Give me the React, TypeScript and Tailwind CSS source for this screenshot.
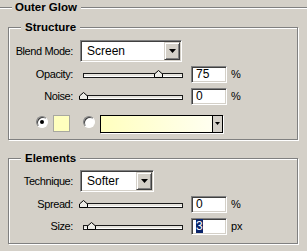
const font = "font-['Liberation_Sans',Arial,sans-serif]";

function Line({ className = "" }: { className?: string }) {
  return <div className={`h-[2px] border-t border-t-[#808080] border-b border-b-white ${className}`} />;
}

function DownArrow({ w = 7, h = 4 }: { w?: number; h?: number }) {
  return (
    <svg width={w} height={h} viewBox={`0 0 ${w} ${h}`} className="block">
      <polygon points={`0,0 ${w},0 ${w / 2},${h}`} fill="#000" />
    </svg>
  );
}

function Select({ value, width }: { value: string; width: string }) {
  return (
    <div
      className={`flex h-[22px] ${width} border border-t-[#808080] border-l-[#808080] border-r-white border-b-white bg-white p-px shadow-[inset_1px_1px_0_#404040,inset_-1px_-1px_0_#d4d0c8]`}
    >
      <span className="flex-1 pl-[5px] text-[12px] leading-[18px] text-black">{value}</span>
      <div className="flex w-[16px] items-center justify-center border border-t-[#d4d0c8] border-l-[#d4d0c8] border-r-[#404040] border-b-[#404040] bg-[#d4d0c8] shadow-[inset_1px_1px_0_#fff,inset_-1px_-1px_0_#808080]">
        <DownArrow />
      </div>
    </div>
  );
}

function Field({ children }: { children: React.ReactNode }) {
  return (
    <div className="ml-[4px] h-[17px] w-[36px] border border-t-[#808080] border-l-[#808080] border-r-white border-b-white bg-white pl-[4px] shadow-[inset_1px_1px_0_#404040,inset_-1px_-1px_0_#d4d0c8]">
      <span className="block text-[12px] leading-[15px] text-black">{children}</span>
    </div>
  );
}

function Slider({ at }: { at: number }) {
  return (
    <div className="relative ml-[6px] h-[17px] w-[108px]">
      <div className="mx-[4px] mt-[7px] h-[5px] border border-[#1a1a1a] bg-[#e6e4de] shadow-[inset_0_-1px_0_#fff]" />
      <svg width="9" height="8" viewBox="0 0 9 8" className="absolute top-[4px]" style={{ left: `${at - 0.5}px` }}>
        <polygon points="0.5,7.5 0.5,4 4.5,0.5 8.5,4 8.5,7.5" fill="#ecebe6" stroke="#000" strokeWidth="1" />
      </svg>
    </div>
  );
}

function Label({ children }: { children: React.ReactNode }) {
  return <span className="w-[64px] text-right text-[11px] tracking-[-0.4px] text-black">{children}</span>;
}

function SliderRow({ label, at, unit, mt, children }: { label: string; at: number; unit: string; mt: string; children: React.ReactNode }) {
  return (
    <div className={`flex h-[17px] items-center ${mt}`}>
      <Label>{label}</Label>
      <Slider at={at} />
      <Field>{children}</Field>
      <span className="ml-[4px] text-[11px] text-black">{unit}</span>
    </div>
  );
}

function Group({ title, height, children }: { title: string; height: string; children: React.ReactNode }) {
  return (
    <div className={`relative ml-[8px] w-[290px] ${height} border border-[#808080] shadow-[inset_1px_1px_0_#fff,1px_1px_0_#fff]`}>
      <span className="absolute left-[12px] top-[-7px] bg-[#d4d0c8] px-[4px] text-[11.5px] font-bold leading-[13px] text-black">
        {title}
      </span>
      {children}
    </div>
  );
}

function Radio({ on }: { on?: boolean }) {
  return (
    <div className="flex h-[12px] w-[12px] items-center justify-center rounded-full border border-t-[#808080] border-l-[#808080] border-r-white border-b-white bg-white shadow-[inset_1px_1px_0_#404040]">
      {on && <div className="h-[4px] w-[4px] rounded-full bg-black" />}
    </div>
  );
}

export default function App() {
  return (
    <div className={`${font} h-[251px] w-[307px] overflow-hidden bg-[#d4d0c8]`}>
      <div className="flex h-[15px] items-center">
        <Line className="w-[12px]" />
        <span className="ml-[3px] text-[11.5px] font-bold text-black">Outer Glow</span>
        <Line className="ml-[4px] flex-1" />
      </div>

      <div className="mt-[12px]">
        <Group title="Structure" height="h-[113px]">
          <div className="flex flex-col pt-[12px]">
            <div className="flex h-[22px] items-center">
              <Label>Blend Mode:</Label>
              <div className="ml-[7px]">
                <Select value="Screen" width="w-[102px]" />
              </div>
            </div>
            <SliderRow label="Opacity:" at={75} unit="%" mt="mt-[4px]">75</SliderRow>
            <SliderRow label="Noise:" at={0} unit="%" mt="mt-[5px]">0</SliderRow>
            <div className="mt-[10px] flex h-[17px] items-center">
              <div className="ml-[27px] mt-[1px] self-start">
                <Radio on />
              </div>
              <div className="ml-[5px] h-[17px] w-[17px] border border-[#a8a8a0] bg-[#ffffbe]" />
              <div className="ml-[13px] mt-[1px] self-start">
                <Radio />
              </div>
              <div className="ml-[5px] flex h-[18px] w-[123px] border border-black bg-gradient-to-r from-[#ffffbe] to-[#fffff4] shadow-[1px_1px_0_#fff]">
                <div className="flex-1" />
                <div className="flex w-[10px] items-center justify-center border-l border-black bg-[#d4d0c8]">
                  <DownArrow w={5} h={3} />
                </div>
              </div>
            </div>
          </div>
        </Group>
      </div>

      <div className="mt-[18px]">
        <Group title="Elements" height="h-[86px]">
          <div className="flex flex-col pt-[11px]">
            <div className="flex h-[22px] items-center">
              <Label>Technique:</Label>
              <div className="ml-[7px]">
                <Select value="Softer" width="w-[74px]" />
              </div>
            </div>
            <SliderRow label="Spread:" at={0} unit="%" mt="mt-[4px]">0</SliderRow>
            <SliderRow label="Size:" at={8} unit="px" mt="mt-[5px]">
              <span className="bg-[#0a246a] text-white">3</span>
            </SliderRow>
          </div>
        </Group>
      </div>
    </div>
  );
}
